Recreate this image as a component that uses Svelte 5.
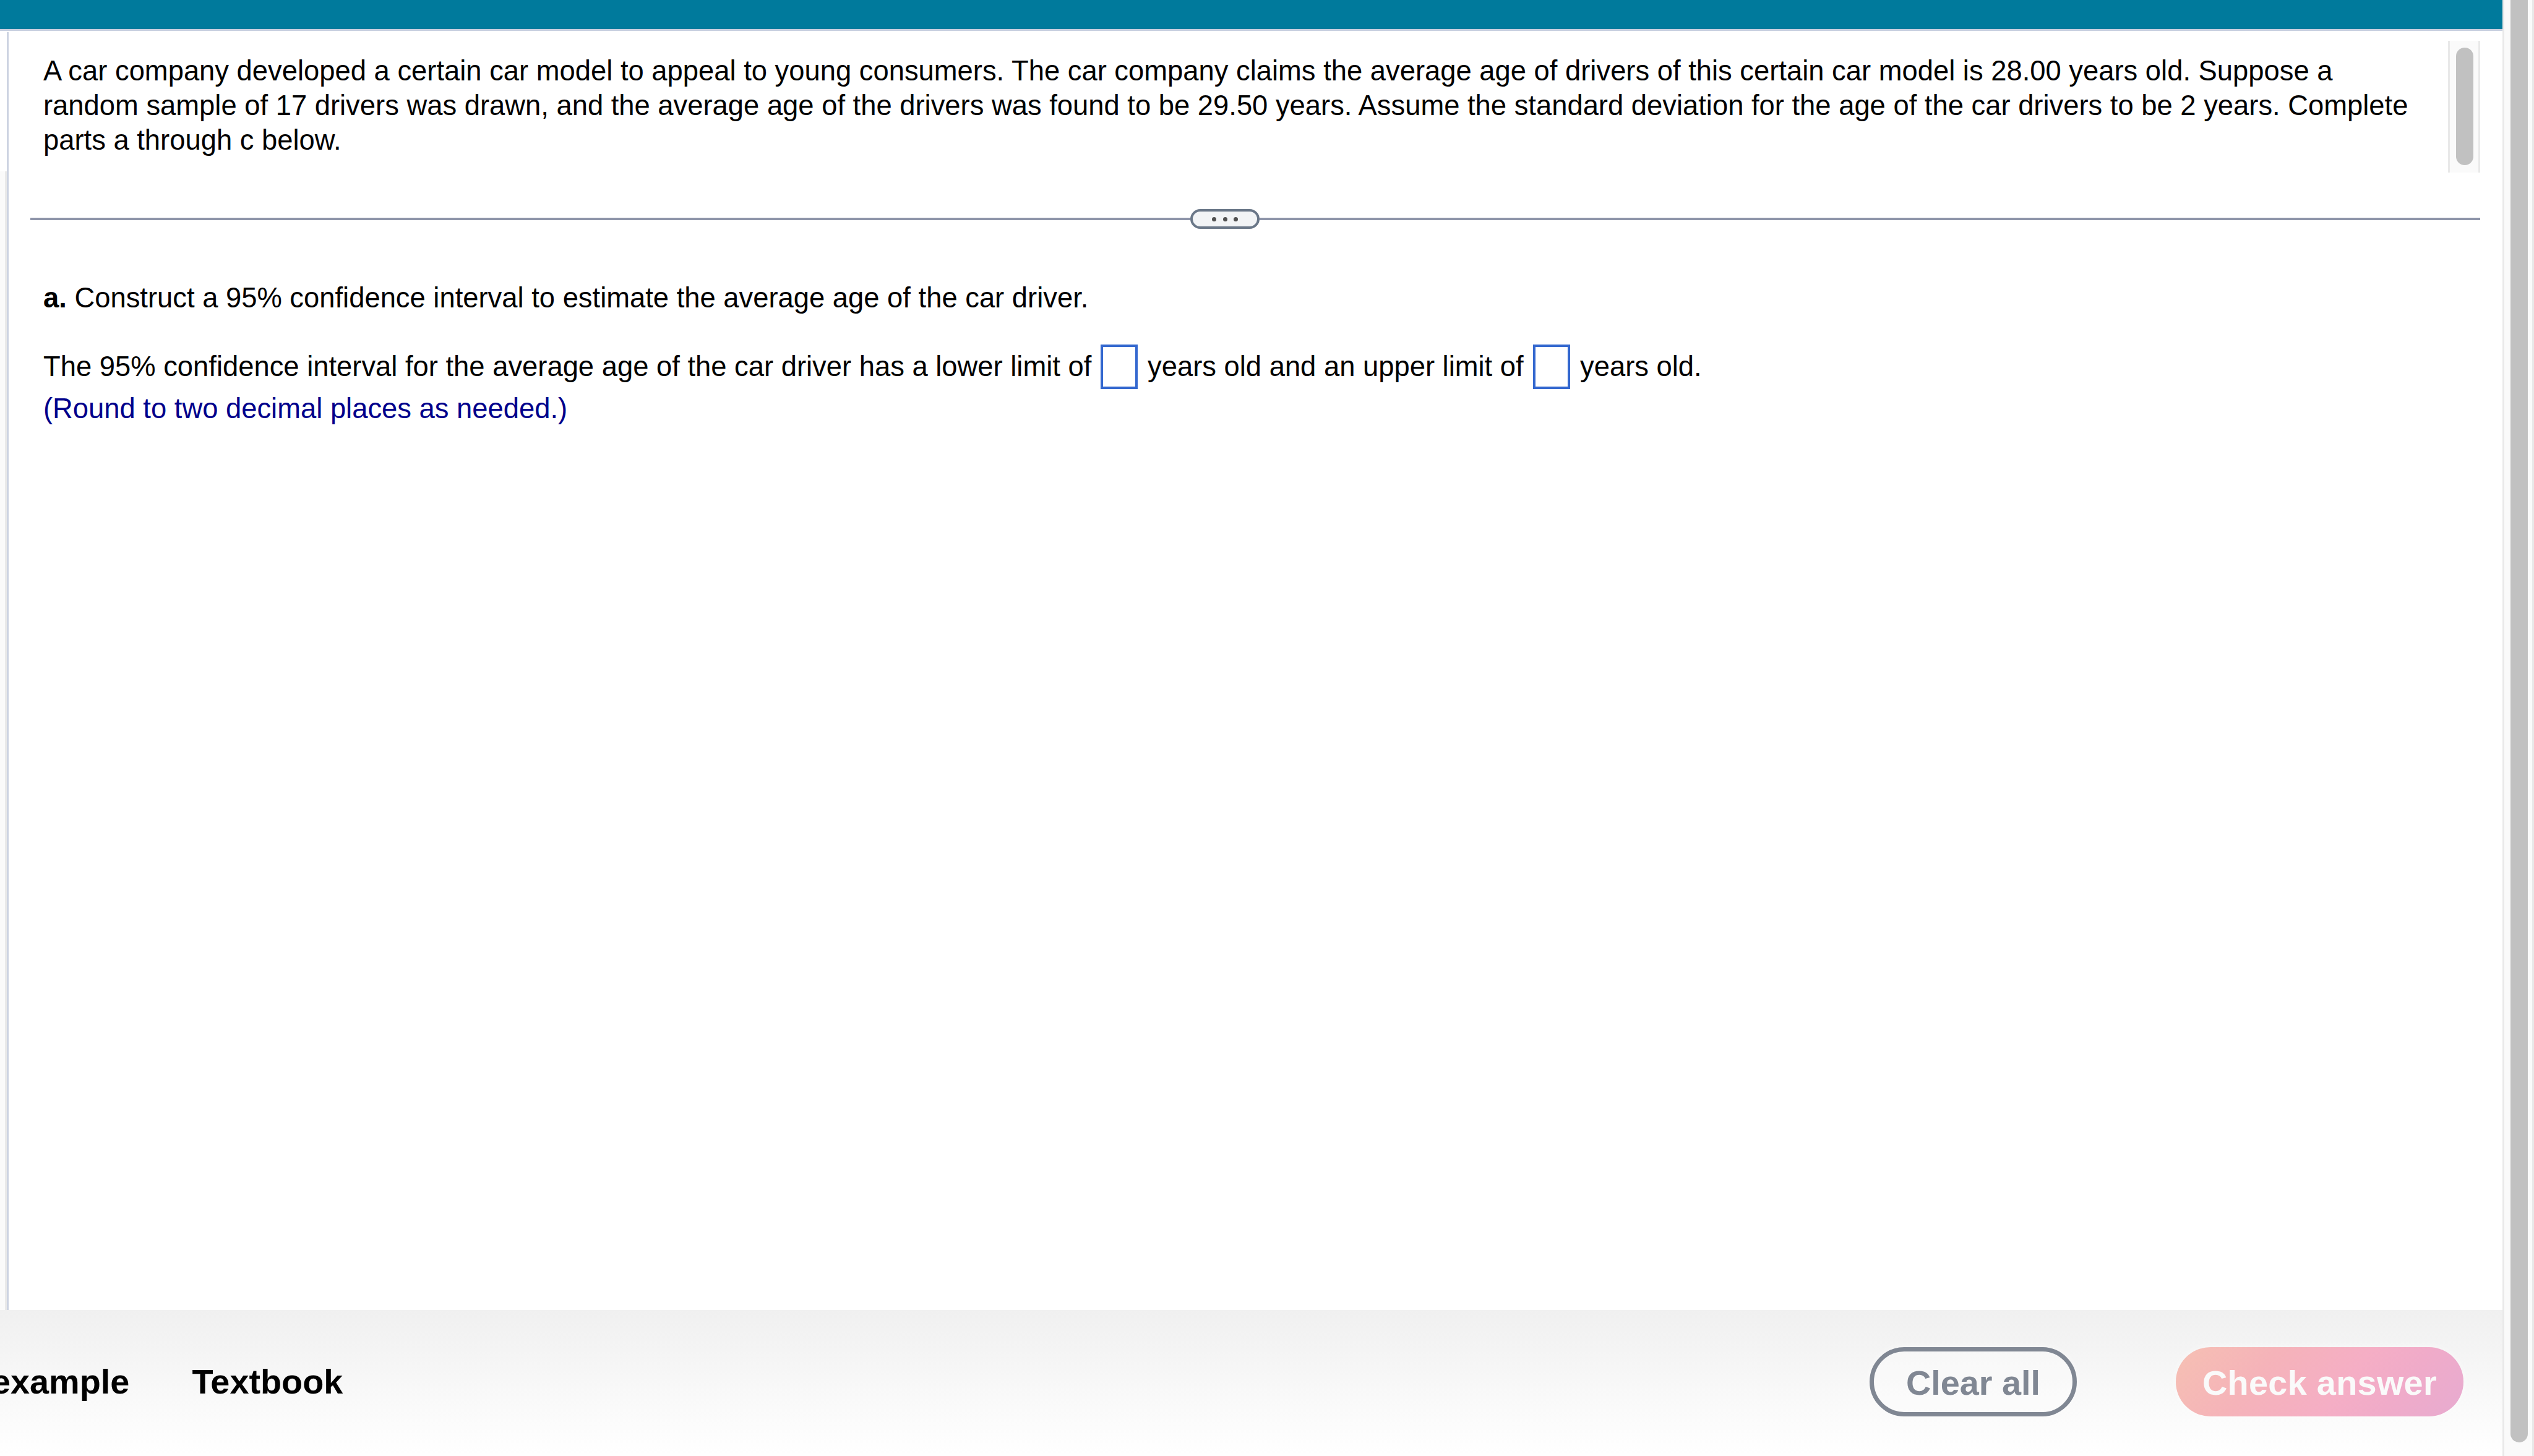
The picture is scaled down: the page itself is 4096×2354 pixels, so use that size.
<script>
	let lower = '';
	let upper = '';

	const dots = [0, 1, 2];
</script>

<div class="page">
	<div class="main">
		<header class="topbar"></header>

		<div class="body">
			<aside class="side">
				<div class="side-track"></div>
			</aside>

			<main class="content">
				<section class="problem">
					<p class="prompt">
						A car company developed a certain car model to appeal to young consumers. The car company claims the average age of drivers of this certain car model is 28.00 years old. Suppose a<br />
						random sample of 17 drivers was drawn, and the average age of the drivers was found to be 29.50 years. Assume the standard deviation for the age of the car drivers to be 2 years. Complete<br />
						parts a through c below.
					</p>
					<div class="scroller">
						<div class="scroller-thumb"></div>
					</div>
				</section>

				<div class="divider">
					<span class="rule"></span>
					<button class="handle" aria-label="Resize">
						{#each dots as dot (dot)}
							<i></i>
						{/each}
					</button>
					<span class="rule"></span>
				</div>

				<section class="question">
					<p><b>a.</b> Construct a 95% confidence interval to estimate the average age of the car driver.</p>
					<div class="answer">
						<span class="before">The 95% confidence interval for the average age of the car driver has a lower limit of</span>
						<input type="text" aria-label="Lower limit" bind:value={lower} />
						<span class="between">years old and an upper limit of</span>
						<input type="text" aria-label="Upper limit" bind:value={upper} />
						<span>years old.</span>
					</div>
					<p class="hint">(Round to two decimal places as needed.)</p>
				</section>
			</main>
		</div>

		<footer class="footer">
			<nav class="links">
				<span class="link">example</span>
				<span class="link">Textbook</span>
			</nav>
			<div class="actions">
				<button class="btn clear">Clear all</button>
				<button class="btn check">Check answer</button>
			</div>
		</footer>
	</div>

	<div class="scrollbar">
		<div class="scrollbar-thumb"></div>
	</div>
</div>

<style>
	:global(body) {
		background: #fff;
		overflow: hidden;
	}

	.page {
		display: flex;
		width: 4096px;
		height: 2354px;
		overflow: hidden;
		background: #fff;
		color: #000;
		font-family: 'Liberation Sans', Arial, sans-serif;
		font-size: 45.36px;
		line-height: 55.82px;
	}

	.main {
		display: flex;
		flex-direction: column;
		width: 4045px;
		flex: none;
		overflow: hidden;
	}

	.topbar {
		box-sizing: border-box;
		height: 50px;
		flex: none;
		background: #007a9c;
		border-bottom: 3px solid #c8d0e0;
	}

	.body {
		display: flex;
		flex: 1;
		min-height: 0;
		padding-top: 2px;
	}

	/* Right edge of the neighbouring pane */
	.side {
		box-sizing: border-box;
		width: 14px;
		flex: none;
		padding-top: 225px;
		border-right: 3px solid #ccd3e1;
	}

	.side-track {
		box-sizing: border-box;
		height: 100%;
		background: #fafafa;
		border-right: 3px solid #e9e9e9;
	}

	.content {
		flex: 1;
		padding: 14px 36px 0 35px;
	}

	.problem {
		display: flex;
		justify-content: space-between;
		height: 213px;
		padding-left: 21px;
	}

	p {
		margin: 0;
	}

	.prompt {
		padding-top: 21px;
		white-space: nowrap;
	}

	.scroller {
		box-sizing: border-box;
		width: 52px;
		padding: 11px 8px 0 10px;
		background: #fafafa;
		border: solid #e9e9e9;
		border-width: 0 3px;
	}

	.scroller-thumb {
		width: 28px;
		height: 190px;
		border-radius: 14px;
		background: #c1c1c1;
	}

	.divider {
		display: flex;
		align-items: center;
		height: 32px;
		margin-top: 59px;
	}

	.rule {
		height: 4px;
		flex: 1;
		background: #8d94a9;
	}

	.rule:first-child {
		flex: none;
		width: 1875px;
	}

	.handle {
		box-sizing: border-box;
		display: flex;
		align-items: center;
		justify-content: center;
		gap: 10.4px;
		width: 112px;
		height: 32px;
		padding: 0;
		border: 4px solid #6a7788;
		border-radius: 16px;
		background: #f2f4f6;
	}

	.handle i {
		width: 7px;
		height: 7px;
		border-radius: 50%;
		background: #505050;
	}

	.question {
		padding: 83.5px 0 0 21px;
		white-space: nowrap;
	}

	.answer {
		display: flex;
		align-items: center;
		height: 72px;
		margin-top: 48px;
	}

	.before {
		width: 1709px;
	}

	.between {
		width: 623px;
	}

	input {
		box-sizing: border-box;
		width: 60px;
		height: 72px;
		margin-right: 16px;
		padding: 0;
		border: 4px solid #3468cf;
		border-radius: 0;
		background: #fff;
		font: inherit;
		outline: none;
	}

	.hint {
		margin-top: 4px;
		color: #00008b;
	}

	.footer {
		box-sizing: border-box;
		display: flex;
		align-items: flex-start;
		justify-content: space-between;
		height: 236px;
		flex: none;
		padding: 60px 63px 0 0;
		background: linear-gradient(#f0f0f0, #fff);
		font-size: 55.82px;
		font-weight: bold;
	}

	.links {
		display: flex;
		gap: 101px;
		margin-left: -14px;
		line-height: 112px;
	}

	.actions {
		display: flex;
		gap: 160px;
	}

	.btn {
		box-sizing: border-box;
		height: 112px;
		padding: 3px 0 0;
		border: 0;
		border-radius: 56px;
		box-shadow: 0 0 14px rgba(255, 255, 255, 0.5);
		font: inherit;
		text-align: center;
	}

	.clear {
		width: 335px;
		border: 7px solid #808793;
		background: rgba(255, 255, 255, 0.3);
		color: #808793;
	}

	.check {
		width: 465px;
		background: linear-gradient(128deg, #f6c0b3 0%, #f5b3b9 30%, #f5aec5 58%, #f0abc9 75%, #e7abd0 100%);
		color: #fafafa;
		letter-spacing: 0.3px;
	}

	.scrollbar {
		box-sizing: border-box;
		flex: 1;
		padding-left: 10px;
		border: solid #e9e9e9;
		border-width: 0 3px;
		background: #fafafa;
	}

	.scrollbar-thumb {
		width: 28px;
		height: 2332px;
		border-radius: 0 0 14px 14px;
		background: #c1c1c1;
	}
</style>
